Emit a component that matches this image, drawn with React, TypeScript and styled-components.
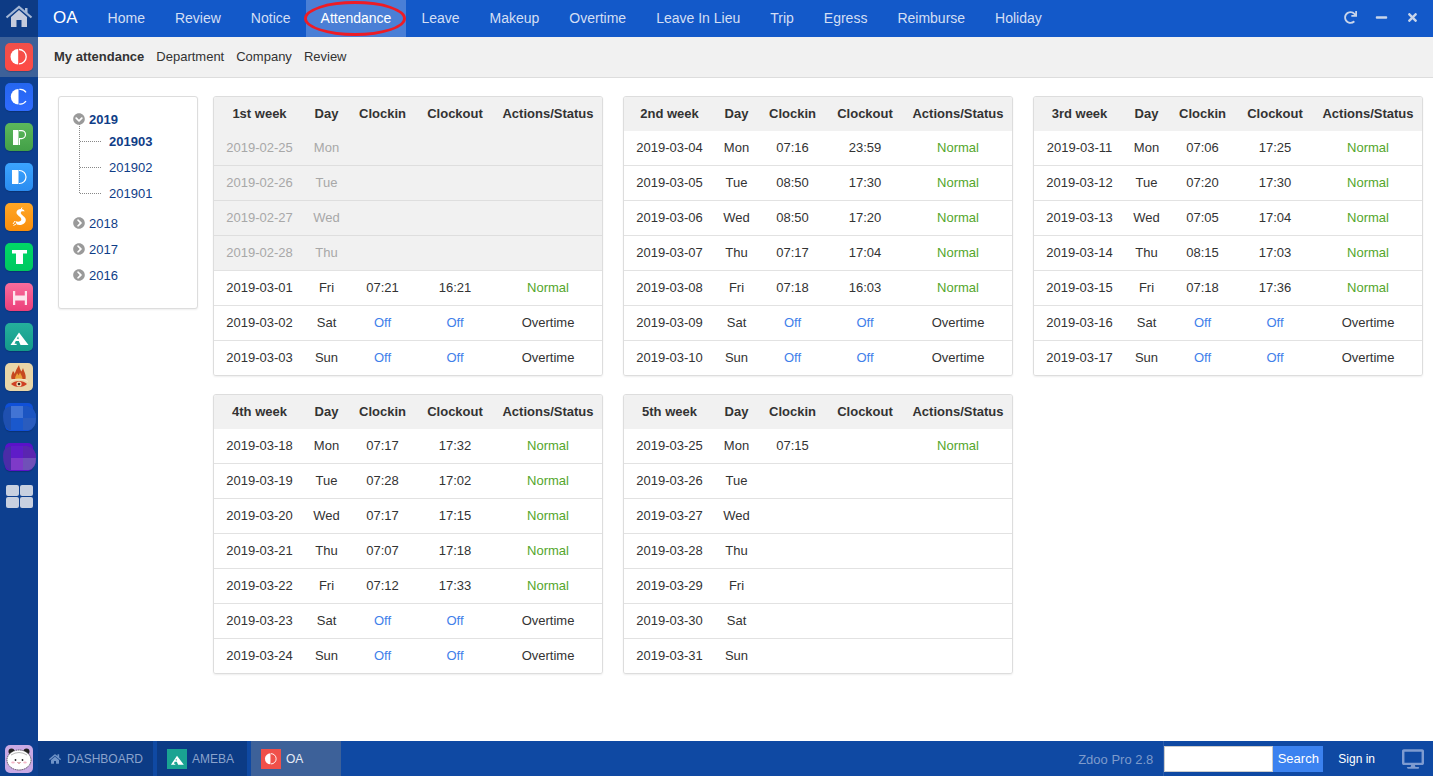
import React from "react";
import styled, { createGlobalStyle } from "styled-components";
import { FaHome, FaTimes, FaMinus, FaRedo, FaChevronCircleDown, FaChevronCircleRight, FaDesktop } from "react-icons/fa";

const Global = createGlobalStyle`
  html, body { margin: 0; padding: 0; height: 100%; overflow: hidden; background: #fff; }
  body { font-family: "Liberation Sans", Arial, sans-serif; font-size: 13px; color: #333; }
  * { box-sizing: border-box; }
`;

const Shell = styled.div`
  width: 1433px; height: 776px; display: grid;
  grid-template-columns: 38px 1fr; grid-template-rows: 1fr 35px; overflow: hidden;
`;
const Side = styled.aside`
  background: #0d3f8f; display: flex; flex-direction: column; align-items: center;
`;
const HomeBtn = styled.div`
  height: 37px; width: 100%; display: flex; align-items: center; justify-content: center;
  background: #0d3b85; padding-bottom: 4px;
`;
const TileSlot = styled.div<{ $active?: boolean }>`
  width: 100%; height: 40px; display: flex; align-items: center; justify-content: center;
  background: ${(p) => (p.$active ? "#3d6199" : "transparent")};
`;
const Tile = styled.div<{ $bg: string }>`
  width: 28px; height: 28px; border-radius: 5px; background: ${(p) => p.$bg};
  overflow: visible; box-shadow: 0 1px 1px rgba(0, 0, 0, .2);
  svg { display: block; overflow: visible; }
`;
const GridBtn = styled.div`
  margin-top: 8px; display: grid; grid-template-columns: 13px 13px; grid-auto-rows: 11px; gap: 1px;
`;
const GridCell = styled.span`background: #c8d0e0; border-radius: 2px;`;

const Main = styled.main`display: flex; flex-direction: column; min-width: 0; min-height: 0;`;
const TopBar = styled.nav`
  height: 37px; background: #1359c9; display: flex; align-items: stretch; color: #cfdcf3; font-size: 14px;
`;
const Brand = styled.div`
  color: #fff; font-size: 17px; width: 54.6px; padding-left: 15px; display: flex; align-items: center; padding-bottom: 2px;
`;
const NavItem = styled.div<{ $active?: boolean }>`
  position: relative; padding: 0 15px; display: flex; align-items: center;
  background: ${(p) => (p.$active ? "#4a7fd6" : "transparent")};
  color: ${(p) => (p.$active ? "#fff" : "#d3dff4")};
  padding-bottom: 1px;
`;
const Ellipse = styled.span`
  position: absolute; left: -2px; top: 1px; width: 102px; height: 35px;
  border: 3px solid #ee1c25; border-radius: 50%;
`;
const WinTools = styled.div`
  margin-left: auto; display: flex; align-items: center; gap: 18px; padding-right: 14px; color: #c9d5ea; font-size: 13px;
  padding-bottom: 3px;
`;
const SubBar = styled.div`
  height: 41px; background: #f1f1f1; border-bottom: 1px solid #ddd; padding: 0 0 1px 16px;
  display: flex; align-items: center; gap: 12px; font-size: 13px; color: #333;
`;
const SubItem = styled.span<{ $active?: boolean }>`font-weight: ${(p) => (p.$active ? 700 : 400)};`;
const Content = styled.div`
  flex: 1; display: flex; align-items: flex-start; gap: 15px; padding: 18px 10px 0 20px; min-height: 0;
`;
const TreePanel = styled.div`
  width: 140px; height: 213px; flex: none; background: #fff; border: 1px solid #ddd; border-radius: 3px;
  box-shadow: 0 1px 2px rgba(0, 0, 0, .07); padding: 9px 0 0 14px; color: #0f3d87;
`;
const Year = styled.div<{ $open?: boolean }>`
  height: 26px; display: flex; align-items: center; gap: 4px; font-weight: ${(p) => (p.$open ? 700 : 400)};
  svg { color: #9a9a9a; font-size: 12px; }
`;
const Months = styled.div`
  margin: -8px 0 17px 6px; border-left: 1px dotted #888; height: 69px; padding-top: 3px;
  display: flex; flex-direction: column;
`;
const Month = styled.div<{ $active?: boolean }>`
  height: 26px; flex: none; display: flex; align-items: center; gap: 8px; font-weight: ${(p) => (p.$active ? 700 : 400)};
  &::before { content: ""; width: 21px; border-top: 1px dotted #888; margin-top: 1px; }
  position: relative; top: 1px;
`;
const Weeks = styled.div`
  display: grid; grid-template-columns: repeat(3, 390px); grid-auto-rows: 280px; gap: 18px 20px;
`;
const Card = styled.div`
  background: #fff; border: 1px solid #ddd; border-radius: 3px; overflow: hidden;
  box-shadow: 0 1px 2px rgba(0, 0, 0, .07);
`;
const Table = styled.table`
  width: 388px; border-collapse: collapse; table-layout: fixed;
  th:nth-child(3), td:nth-child(3) { padding-left: 1px; }
`;
const Th = styled.th`
  height: 34px; padding: 0 0 2px; background: #f1f1f1; font-size: 13px; font-weight: 700; color: #333; text-align: center;
`;
const Row = styled.tr<{ $past?: boolean }>`
  background: ${(p) => (p.$past ? "#f1f1f1" : "#fff")};
  color: ${(p) => (p.$past ? "#a8a8a8" : "#333")};
  td { border-top: 1px solid ${(p) => (p.$past ? "#dedede" : "#e2e2e2")}; }
  &:first-child td { border-top: 0; height: 34px; }
`;
const Td = styled.td<{ $tone?: "ok" | "off" }>`
  height: 35px; padding: 0; text-align: center; font-size: 13px;
  color: ${(p) => (p.$tone === "ok" ? "#53a62b" : p.$tone === "off" ? "#3f80ea" : "inherit")};
`;

const Bottom = styled.footer`
  grid-column: 1 / -1; background: #0f49a3; display: flex; align-items: stretch; height: 35px;
`;
const Avatar = styled.div`width: 38px; background: #0d3f8f; display: flex; align-items: center; justify-content: center;`;
const Task = styled.div<{ $w: number; $active?: boolean }>`
  width: ${(p) => p.$w}px; margin-right: 4px; display: flex; align-items: center; gap: 5px; padding-left: 10px;
  background: ${(p) => (p.$active ? "#3d6199" : "#0c3b85")};
  color: ${(p) => (p.$active ? "#e6ecf6" : "#8ba3cc")}; font-size: 12px;
  > svg { margin: 0 1px 0 1px; color: #6f93c8; }
`;
const TaskIcon = styled.div<{ $bg: string }>`width: 20px; height: 20px; background: ${(p) => p.$bg}; svg { display: block; }`;
const Right = styled.div`margin-left: auto; display: flex; align-items: center;`;
const Version = styled.span`color: #7e9bcb; font-size: 13px; padding: 1px 10px 0 0; height: 35px; display: flex; align-items: center; border-right: 1px solid #2a5cab;`;
const SearchInput = styled.div`width: 109px; height: 26px; background: #fff; border: 1px solid #ccc;`;
const SearchBtn = styled.div`width: 50px; height: 26px; background: #3b82f0; color: #fff; display: flex; align-items: center; justify-content: center; font-size: 13px;`;
const SignIn = styled.span`color: #fff; font-size: 12px; margin: 0 27px 0 15px;`;
const Monitor = styled.div`color: #7e9bd0; font-size: 22px; display: flex; margin-right: 9px;`;

type Cell = [string, string, string?, string?, string?];
const mk = (m: string, start: number, names: string[], data: (string | null)[][]): Cell[] => names.map((n, i) => {
  const d = data[i] || [];
  return [`2019-${m}-${String(start + i).padStart(2, "0")}`, n, d[0] ?? "", d[1] ?? "", d[2] ?? ""] as Cell;
});
const D = ["Mon", "Tue", "Wed", "Thu", "Fri", "Sat", "Sun"];
const OT = ["Off", "Off", "Overtime"];
const N = (a: string, b: string) => [a, b, "Normal"];
const weeks: { title: string; rows: Cell[]; past?: number }[] = [
  { title: "1st week", past: 4, rows: [
    ...mk("02", 25, D.slice(0, 4), []),
    ["2019-03-01", "Fri", "07:21", "16:21", "Normal"], ["2019-03-02", "Sat", "Off", "Off", "Overtime"], ["2019-03-03", "Sun", "Off", "Off", "Overtime"],
  ] },
  { title: "2nd week", rows: mk("03", 4, D, [N("07:16", "23:59"), N("08:50", "17:30"), N("08:50", "17:20"), N("07:17", "17:04"), N("07:18", "16:03"), OT, OT]) },
  { title: "3rd week", rows: mk("03", 11, D, [N("07:06", "17:25"), N("07:20", "17:30"), N("07:05", "17:04"), N("08:15", "17:03"), N("07:18", "17:36"), OT, OT]) },
  { title: "4th week", rows: mk("03", 18, D, [N("07:17", "17:32"), N("07:28", "17:02"), N("07:17", "17:15"), N("07:07", "17:18"), N("07:12", "17:33"), OT, OT]) },
  { title: "5th week", rows: mk("03", 25, D, [["07:15", "", "Normal"]]) },
];
const nav = ["Home", "Review", "Notice", "Attendance", "Leave", "Makeup", "Overtime", "Leave In Lieu", "Trip", "Egress", "Reimburse", "Holiday"];
const widths = [91, 43, 68, 78, 108];

const HomeGlyph = () => (
  <svg width="28" height="24" viewBox="0 0 28 24">
    <path d="M6 12 14 5l8 7v10h-5.500v-7h-5v7H6z" fill="#c5cbdc" />
    <path d="M20 3h2.500v6L20 7z" fill="#a9bcd8" />
    <path d="M1.500 12.500 14 2l12.500 10.500" fill="none" stroke="#a3b6d4" strokeWidth="2.200" />
  </svg>
);
const HalfO = ({ s = 28 }: { s?: number }) => (
  <svg width={s} height={s} viewBox="0 0 28 28"><path d="M13.200 6a7.700 7.700 0 0 0 0 15.400z" fill="#fff" /><path d="M14 6.500a7.200 7.200 0 0 1 0 14.400" fill="none" stroke="#fff" strokeWidth="1.300" /></svg>
);
const Crescent = () => (
  <svg width="28" height="28" viewBox="0 0 28 28"><path d="M13.500 6a7.700 7.700 0 0 0 0 15.400z" fill="#fff" /><path d="M21 9.300A7 7 0 0 0 14.300 6.400M14.300 21A7 7 0 0 0 21 18" fill="none" stroke="#fff" strokeWidth="1.300" /></svg>
);
const PGlyph = () => (
  <svg width="28" height="28" viewBox="0 0 28 28"><rect x="8" y="7" width="5.500" height="15" fill="#fff" /><path d="M14 7.600h2.500a4 4 0 0 1 0 8H14" fill="none" stroke="#fff" strokeWidth="1.200" /><rect x="14" y="15" width="1" height="7" fill="#fff" /></svg>
);
const DGlyph = () => (
  <svg width="28" height="28" viewBox="0 0 28 28"><rect x="7" y="7" width="6.500" height="14" fill="#fff" /><path d="M14 7.500h.5a6.500 6.500 0 0 1 0 13H14" fill="none" stroke="#fff" strokeWidth="1.200" /></svg>
);
const SGlyph = () => (
  <svg width="28" height="28" viewBox="0 0 28 28">
    <path d="M19 7c-2.500-1.800-7-1-7.500 2-.5 3.500 5 4.500 4.800 7.500-.1 2-3 3-6 1.500l1.500 3.500c4 1.200 8.800-.5 9-4.600.2-3.500-5.500-5-5-7.500.2-1.300 2-1.500 3.700-.9z" fill="#fff" />
    <path d="M17 4.500l-1 2M10 18l-2 3M11 21l-2.500 1.500" stroke="#fff" strokeWidth="1" fill="none" />
  </svg>
);
const TGlyph = () => (
  <svg width="28" height="28" viewBox="0 0 28 28"><path d="M7 7h15v3.500h-4v10.500h-7V10.500H7z" fill="#fff" /></svg>
);
const HGlyph = () => (
  <svg width="28" height="28" viewBox="0 0 28 28"><path d="M8 8h2.200v4.500h9.600V8H22v14h-2.200v-4.600h-9.600V22H8z" fill="#fde4ec" /></svg>
);
const AGlyph = ({ s = 28, bg = "#1aa392" }: { s?: number; bg?: string }) => (
  <svg width={s} height={s} viewBox="0 0 28 28">
    <path d="M14 9.500 23.500 22h-8L13.800 18h-3L9.500 20.800H11.500L11.700 22H5.500z" fill="#fff" />
    <path d="M11.800 15.500 13.200 13.500 13.800 16.300z" fill={bg} />
  </svg>
);
const Flame = () => (
  <svg width="28" height="28" viewBox="0 0 28 28">
    <path d="M6.500 16c-1-3 .5-5 1.500-8 1 .8 1.500 1.800 1.500 3 1-3 2.500-6 4.500-9 .5 3 1.500 4.500 2.200 6.500.8-1 1.300-2 1.800-3.500 1 3.500 3.500 7 2.500 11z" fill="#c6491f" />
    <path d="M10 16c0-2.500 1.500-4 2-6 .8 1 1.200 1.500 1.500 2.500.6-1 1-2 1.500-3 .8 2 2.500 3.500 2.500 6.500z" fill="#e8a13a" />
    <path d="M6 21c4-4 12-4 16 0-4 4-12 4-16 0z" fill="#cf3f22" />
    <path d="M5 18.500c5-3.200 13-3.200 18 0" fill="none" stroke="#f6e7c6" strokeWidth="1" />
    <circle cx="14" cy="21" r="2.600" fill="#f3e1b8" /><circle cx="14" cy="21" r="1.300" fill="#3a2a20" />
  </svg>
);
const Blur = ({ a, b, c, d, e }: { a: string; b: string; c: string; d: string; e: string }) => (
  <svg width="28" height="28" viewBox="0 0 28 28">
    <path d="M-2 13Q-2 7 1 5 4 3 8 3H22Q31 5 31 15 31 25 24 27H4Q-2 24-2 13z" fill={a} />
    <rect x="6" y="3" width="12" height="12" fill={b} />
    <rect x="6" y="15" width="12" height="12" fill={c} />
    <path d="M18 3h4Q31 5 31 15H18z" fill={e} />
    <path d="M18 15H31Q31 25 24 27H18z" fill={d} />
  </svg>
);
const Panda = () => (
  <svg width="28" height="28" viewBox="0 0 28 28">
    <rect width="28" height="28" rx="5" fill="#c9a9e4" />
    <circle cx="6.500" cy="6.500" r="3" fill="#222" /><circle cx="21.500" cy="6.500" r="3" fill="#222" />
    <ellipse cx="14" cy="15" rx="12" ry="10" fill="#fff" stroke="#444" strokeWidth=".8" strokeDasharray="1.500 .7" />
    <path d="M6 10q8-5 16 0" fill="none" stroke="#888" strokeWidth=".6" />
    <circle cx="10.500" cy="15" r=".9" fill="#222" /><circle cx="17.500" cy="15" r=".9" fill="#222" />
    <ellipse cx="8" cy="17.500" rx="1.800" ry="1" fill="#f4b8c8" /><ellipse cx="20" cy="17.500" rx="1.800" ry="1" fill="#f4b8c8" />
    <path d="M12.500 17.500q1.500 1.500 3 0" fill="none" stroke="#a33" strokeWidth=".8" />
  </svg>
);

export default function App() {
  const tiles: [string, React.ReactNode][] = [
    ["linear-gradient(#f0504a,#ff4a45)", <HalfO />],
    ["linear-gradient(#2566f0,#2f6bff)", <Crescent />],
    ["linear-gradient(#5cb85c,#43a047)", <PGlyph />],
    ["linear-gradient(#3ba4ff,#2a8cf0)", <DGlyph />],
    ["linear-gradient(#ffa726,#f98e0c)", <SGlyph />],
    ["linear-gradient(#00d866,#00c860)", <TGlyph />],
    ["linear-gradient(#f76d9c,#ec3f7a)", <HGlyph />],
    ["linear-gradient(#25b09c,#139a8a)", <AGlyph bg="#1ba593" />],
    ["#e9d6a8", <Flame />],
    ["#0f50d8", <Blur a="#1f50b0" b="#4274d4" c="#1a58cc" d="#2a5cbe" e="#1c55c2" />],
    ["#5a12c8", <Blur a="#4a2ca8" b="#5f1cc8" c="#7e3ac8" d="#7050b8" e="#5a25b0" />],
  ];
  return (
    <>
      <Global />
      <Shell>
        <Side>
          <HomeBtn><HomeGlyph /></HomeBtn>
          {tiles.map(([bg, g], i) => (
            <TileSlot key={i} $active={i === 0}><Tile $bg={bg}>{g}</Tile></TileSlot>
          ))}
          <GridBtn>{[0, 1, 2, 3].map((i) => <GridCell key={i} />)}</GridBtn>
        </Side>
        <Main>
          <TopBar>
            <Brand>OA</Brand>
            {nav.map((n) => (
              <NavItem key={n} $active={n === "Attendance"}>
                {n}
                {n === "Attendance" && <Ellipse />}
              </NavItem>
            ))}
            <WinTools><FaRedo /><FaMinus /><FaTimes /></WinTools>
          </TopBar>
          <SubBar>
            <SubItem $active>My attendance</SubItem>
            <SubItem>Department</SubItem>
            <SubItem>Company</SubItem>
            <SubItem>Review</SubItem>
          </SubBar>
          <Content>
            <TreePanel>
              <Year $open><FaChevronCircleDown />2019</Year>
              <Months>
                <Month $active>201903</Month>
                <Month>201902</Month>
                <Month>201901</Month>
              </Months>
              <Year><FaChevronCircleRight />2018</Year>
              <Year><FaChevronCircleRight />2017</Year>
              <Year><FaChevronCircleRight />2016</Year>
            </TreePanel>
            <Weeks>
              {weeks.map((w) => (
                <Card key={w.title}>
                  <Table>
                    <colgroup>{widths.map((x, i) => <col key={i} style={{ width: x }} />)}</colgroup>
                    <thead>
                      <tr><Th>{w.title}</Th><Th>Day</Th><Th>Clockin</Th><Th>Clockout</Th><Th>Actions/Status</Th></tr>
                    </thead>
                    <tbody>
                      {w.rows.map((r, i) => (
                        <Row key={r[0]} $past={i < (w.past ?? 0)}>
                          <Td>{r[0]}</Td>
                          <Td>{r[1]}</Td>
                          <Td $tone={r[2] === "Off" ? "off" : undefined}>{r[2]}</Td>
                          <Td $tone={r[3] === "Off" ? "off" : undefined}>{r[3]}</Td>
                          <Td $tone={r[4] === "Normal" ? "ok" : undefined}>{r[4]}</Td>
                        </Row>
                      ))}
                    </tbody>
                  </Table>
                </Card>
              ))}
            </Weeks>
          </Content>
        </Main>
        <Bottom>
          <Avatar><Panda /></Avatar>
          <Task $w={115}><FaHome />DASHBOARD</Task>
          <Task $w={90}><TaskIcon $bg="#1aa392"><AGlyph s={20} /></TaskIcon>AMEBA</Task>
          <Task $w={90} $active><TaskIcon $bg="#f0504a"><HalfO s={20} /></TaskIcon>OA</Task>
          <Right>
            <Version>Zdoo Pro 2.8</Version>
            <SearchInput />
            <SearchBtn>Search</SearchBtn>
            <SignIn>Sign in</SignIn>
            <Monitor><FaDesktop /></Monitor>
          </Right>
        </Bottom>
      </Shell>
    </>
  );
}
